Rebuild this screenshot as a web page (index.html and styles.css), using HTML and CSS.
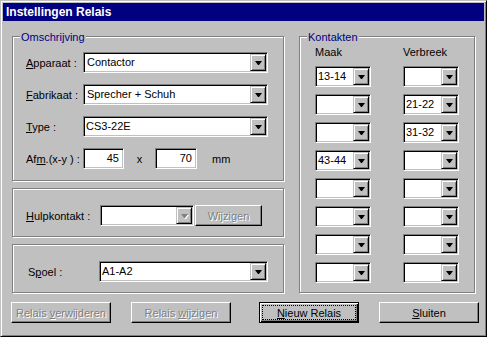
FILE: index.html
```html
<!DOCTYPE html>
<html lang="nl">
<head>
  <meta charset="UTF-8" />
  <title>Instellingen Relais</title>
  <link rel="stylesheet" href="styles.css">
</head>
<body>
  <div class="window">
    <div class="titlebar">Instellingen Relais</div>
    <div class="client">
      <div class="columns">
        <div class="left">
          <div class="group g-desc">
            <span class="group-title">Omschrijving</span>
            <div class="row">
              <span class="lbl"><u>A</u>pparaat :</span>
              <div class="combo w-desc"><span class="val edit-val">Contactor</span><span class="drop"></span></div>
            </div>
            <div class="row">
              <span class="lbl"><u>F</u>abrikaat :</span>
              <div class="combo w-desc"><span class="val edit-val">Sprecher + Schuh</span><span class="drop"></span></div>
            </div>
            <div class="row">
              <span class="lbl"><u>T</u>ype :</span>
              <div class="combo w-desc"><span class="val">CS3-22E</span><span class="drop"></span></div>
            </div>
            <div class="row">
              <span class="lbl">Af<u>m</u>.(x-y ) :</span>
              <div class="edit w-afm1">45</div>
              <span class="times">x</span>
              <div class="edit w-afm2">70</div>
              <span class="unit">mm</span>
            </div>
          </div>

          <div class="group g-hulp">
            <div class="row">
              <span class="lbl lbl-hulp"><u>H</u>ulpkontakt :</span>
              <div class="combo w-hulp"><span class="val"></span><span class="drop disabled"></span></div>
              <button class="btn btn-small disabled"><span>Wijzigen</span></button>
            </div>
          </div>

          <div class="group g-spoel">
            <div class="row">
              <span class="lbl lbl-spoel">S<u>p</u>oel :</span>
              <div class="combo w-spoel"><span class="val">A1-A2</span><span class="drop"></span></div>
            </div>
          </div>
        </div>

        <div class="group g-kontakt">
          <span class="group-title">Kontakten</span>
          <div class="grid">
            <span class="hdr">Maak</span>
            <span class="hdr">Verbreek</span>
            <div class="combo"><span class="val">13-14</span><span class="drop"></span></div>
            <div class="combo"><span class="val"></span><span class="drop"></span></div>
            <div class="combo"><span class="val"></span><span class="drop"></span></div>
            <div class="combo"><span class="val">21-22</span><span class="drop"></span></div>
            <div class="combo"><span class="val"></span><span class="drop"></span></div>
            <div class="combo"><span class="val">31-32</span><span class="drop"></span></div>
            <div class="combo"><span class="val">43-44</span><span class="drop"></span></div>
            <div class="combo"><span class="val"></span><span class="drop"></span></div>
            <div class="combo"><span class="val"></span><span class="drop"></span></div>
            <div class="combo"><span class="val"></span><span class="drop"></span></div>
            <div class="combo"><span class="val"></span><span class="drop"></span></div>
            <div class="combo"><span class="val"></span><span class="drop"></span></div>
            <div class="combo"><span class="val"></span><span class="drop"></span></div>
            <div class="combo"><span class="val"></span><span class="drop"></span></div>
            <div class="combo"><span class="val"></span><span class="drop"></span></div>
            <div class="combo"><span class="val"></span><span class="drop"></span></div>
          </div>
        </div>
      </div>

      <div class="buttons">
        <button class="btn disabled"><span>Relais <u>v</u>erwijderen</span></button>
        <button class="btn disabled"><span>Relais <u>w</u>ijzigen</span></button>
        <button class="btn btn-default"><span class="focus"><span><u>N</u>ieuw Relais</span></span></button>
        <button class="btn"><span><u>S</u>luiten</span></button>
      </div>
    </div>
  </div>
</body>
</html>
```

FILE: styles.css
```css
* { box-sizing: border-box; }
html, body {
  margin: 0;
  padding: 0;
}
body {
  width: 487px;
  height: 337px;
  overflow: hidden;
  background: #c0c0c0;
  font-family: "Liberation Sans", Arial, sans-serif;
  font-size: 11px;
  color: #000;
}
.window {
  width: 487px;
  height: 337px;
  padding: 2px;
  background: #c0c0c0;
  border: 1px solid;
  border-color: #c0c0c0 #000 #000 #c0c0c0;
  box-shadow: inset 1px 1px #fff, inset -1px -1px #808080;
}
.titlebar {
  height: 18px;
  line-height: 18px;
  padding-left: 3px;
  background: #000080;
  color: #fff;
  font-size: 12px;
  font-weight: bold;
}
.client { padding: 15px 0 0 9px; }
.columns {
  display: flex;
  gap: 15px;
}
.left {
  width: 272px;
  display: flex;
  flex-direction: column;
  gap: 7px;
}

/* etched group frames */
.group {
  position: relative;
  border: 1px solid #808080;
  box-shadow: inset 1px 1px #fff, 1px 1px #fff;
}
.group-title {
  position: absolute;
  top: -6px;
  left: 7px;
  padding: 0 1px;
  line-height: 13px;
  background: #c0c0c0;
  color: #000080;
}
.g-desc {
  height: 145px;
  padding: 15px 0 0 13px;
  display: flex;
  flex-direction: column;
  gap: 11px;
}
.g-hulp {
  height: 49px;
  padding: 16px 0 0 13px;
}
.g-spoel {
  height: 49px;
  padding: 16px 0 0 15px;
}
.g-kontakt {
  width: 176px;
  height: 257px;
  padding: 9px 0 0 15px;
}

.row {
  display: flex;
  align-items: center;
  height: 21px;
}
.lbl {
  width: 57px;
  flex: none;
  white-space: nowrap;
}
.lbl-hulp { width: 74px; }
.lbl-spoel { width: 71px; }

/* sunken fields */
.combo, .edit {
  height: 21px;
  padding: 1px;
  color: #000;
  background: #fff;
  border: 1px solid;
  border-color: #808080 #fff #fff #808080;
  box-shadow: inset 1px 1px #000, inset -1px -1px #c0c0c0;
}
.combo { display: flex; }
.val {
  flex: 1;
  min-width: 0;
  padding-left: 1px;
  line-height: 17px;
  white-space: nowrap;
  overflow: hidden;
}
.edit-val { padding-left: 2px; }
.drop {
  width: 16px;
  flex: none;
  display: flex;
  align-items: center;
  justify-content: center;
  background: #c0c0c0;
  border: 1px solid;
  border-color: #c0c0c0 #000 #000 #c0c0c0;
  box-shadow: inset 1px 1px #fff, inset -1px -1px #808080;
}
.drop::after {
  content: "";
  width: 1px;
  height: 0;
  border-top: 4px solid #000;
  border-left: 3px solid transparent;
  border-right: 3px solid transparent;
}
.drop.disabled::after {
  border-top-color: #808080;
  filter: drop-shadow(1px 1px 0 #fff);
}
.w-desc { width: 185px; }
.w-hulp { width: 94px; }
.w-spoel { width: 169px; }
.edit {
  padding-right: 4px;
  line-height: 17px;
  text-align: right;
}
.w-afm1 { width: 41px; }
.w-afm2 { width: 42px; }
.times {
  width: 31px;
  text-align: center;
}
.unit { margin-left: 15px; }

.grid {
  display: grid;
  grid-template-columns: 56px 56px;
  grid-template-rows: 13px;
  grid-auto-rows: 21px;
  column-gap: 32px;
  row-gap: 7px;
}
.hdr { line-height: 13px; }

/* push buttons */
.btn {
  width: 100px;
  height: 21px;
  padding: 0;
  display: flex;
  align-items: center;
  justify-content: center;
  font: inherit;
  color: #000;
  white-space: nowrap;
  background: #c0c0c0;
  border: 1px solid;
  border-color: #fff #000 #000 #fff;
  box-shadow: inset -1px -1px #808080;
}
.btn.disabled {
  color: #808080;
  text-shadow: 1px 1px 0 #fff;
}
.btn-small {
  width: 67px;
  margin-left: 1px;
}
.buttons {
  display: flex;
  margin: 9px 0 0 -1px;
}
.buttons .btn + .btn { margin-left: 20px; }
.buttons .btn.btn-default {
  margin-left: 28px;
  padding: 2px;
  border-color: #000;
  box-shadow: inset 1px 1px #fff, inset -1px -1px #000, inset -2px -2px #808080;
}
.focus {
  flex: 1;
  align-self: stretch;
  display: flex;
  align-items: center;
  justify-content: center;
  border: 1px dotted #000;
}
```
